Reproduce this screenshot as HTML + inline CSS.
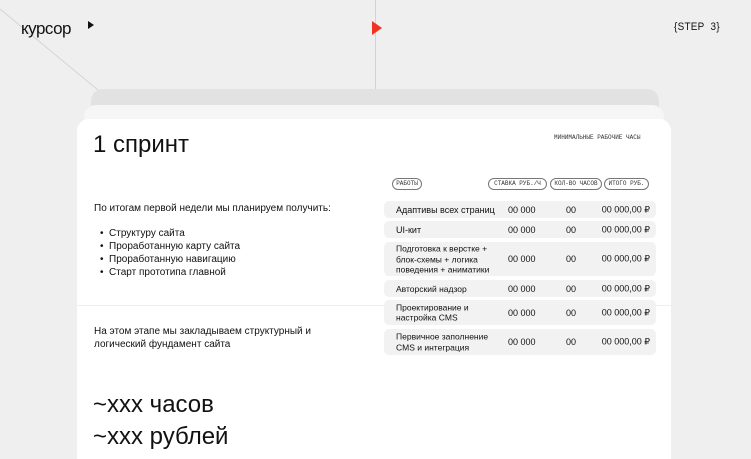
<!DOCTYPE html>
<html><head><meta charset="utf-8"><style>
*{margin:0;padding:0;box-sizing:border-box}
body{width:751px;height:452px;overflow:hidden;background:#efefef;position:relative;font-family:"Liberation Sans","Noto Sans CJK SC",sans-serif;color:#111}
.a{position:absolute;white-space:nowrap}
.card{position:absolute;border-radius:12px 12px 0 0}
.row{position:absolute;left:384px;width:272px;background:#f2f2f2;border-radius:5px;font-size:9px}
.row span{position:absolute;top:50%;transform:translateY(-50%)}
.n{left:12px;line-height:10.5px}
.r{left:124px}.h{left:182px}.t{right:6px}
.pill{position:absolute;top:178px;height:12px;border:1px solid #777;border-radius:7px;font-family:"Liberation Mono",monospace;font-size:6px;line-height:10px;text-align:center;color:#333}
.t1{font-size:10px}
</style></head><body>
<svg class="a" style="left:0;top:0" width="751" height="120"><line x1="0" y1="9" x2="98" y2="90" stroke="#ccc" stroke-width="0.8"/><line x1="375.5" y1="0" x2="375.5" y2="90" stroke="#ccc" stroke-width="0.8"/><polygon points="372,21 382,28 372,35" fill="#ee3322"/><polygon points="88,21 94,25 88,29" fill="#111"/></svg>
<div class="a" style="left:21px;top:19px;font-size:17px;letter-spacing:-0.5px">курсор</div>
<div class="a" style="left:674px;top:21px;font-size:11px;letter-spacing:0.3px;transform:scaleX(0.9);transform-origin:left">{STEP&nbsp;&nbsp;3}</div>
<div class="card" style="left:91px;top:89px;width:568px;height:40px;background:#e2e2e2"></div>
<div class="card" style="left:84px;top:105px;width:580px;height:40px;background:#f6f6f6"></div>
<div class="card" style="left:77px;top:119px;width:594px;height:340px;background:#fff"></div>
<div class="a" style="left:77px;top:305px;width:594px;height:1px;background:#eee"></div>
<div class="a" style="left:93px;top:131px;font-size:24px">1 спринт</div>
<div class="a" style="left:554px;top:134px;font-size:6px;font-family:'Liberation Mono',monospace;color:#333">МИНИМАЛЬНЫЕ РАБОЧИЕ ЧАСЫ</div>
<div class="a t1" style="left:94px;top:203px">По итогам первой недели мы планируем получить:</div>
<div class="a t1" style="left:100px;top:227px;line-height:13px">•&nbsp; Структуру сайта<br>•&nbsp; Проработанную карту сайта<br>•&nbsp; Проработанную навигацию<br>•&nbsp; Старт прототипа главной</div>
<div class="a t1" style="left:94px;top:325px;line-height:13px">На этом этапе мы закладываем структурный и<br>логический фундамент сайта</div>
<div class="a" style="left:93px;top:389px;font-size:24px;line-height:32px">~xxx часов<br>~xxx рублей</div>
<div class="pill" style="left:392px;width:30px">РАБОТЫ</div>
<div class="pill" style="left:488px;width:59px">СТАВКА РУБ./Ч</div>
<div class="pill" style="left:550px;width:52px">КОЛ-ВО ЧАСОВ</div>
<div class="pill" style="left:604px;width:45px">ИТОГО РУБ.</div>
<div class="row" style="top:201px;height:17px"><span class="n">Адаптивы всех страниц</span><span class="r">00 000</span><span class="h">00</span><span class="t">00 000,00 ₽</span></div>
<div class="row" style="top:221px;height:17px"><span class="n">UI-кит</span><span class="r">00 000</span><span class="h">00</span><span class="t">00 000,00 ₽</span></div>
<div class="row" style="top:242px;height:34px"><span class="n" style="font-size:8.5px">Подготовка к верстке +<br>блок-схемы + логика<br>поведения + аниматики</span><span class="r">00 000</span><span class="h">00</span><span class="t">00 000,00 ₽</span></div>
<div class="row" style="top:280px;height:17px"><span class="n" style="font-size:8.5px">Авторский надзор</span><span class="r">00 000</span><span class="h">00</span><span class="t">00 000,00 ₽</span></div>
<div class="row" style="top:300px;height:25px"><span class="n" style="font-size:8.5px">Проектирование и<br>настройка CMS</span><span class="r">00 000</span><span class="h">00</span><span class="t">00 000,00 ₽</span></div>
<div class="row" style="top:329px;height:26px"><span class="n" style="font-size:8.5px">Первичное заполнение<br>CMS и интеграция</span><span class="r">00 000</span><span class="h">00</span><span class="t">00 000,00 ₽</span></div>
</body></html>
